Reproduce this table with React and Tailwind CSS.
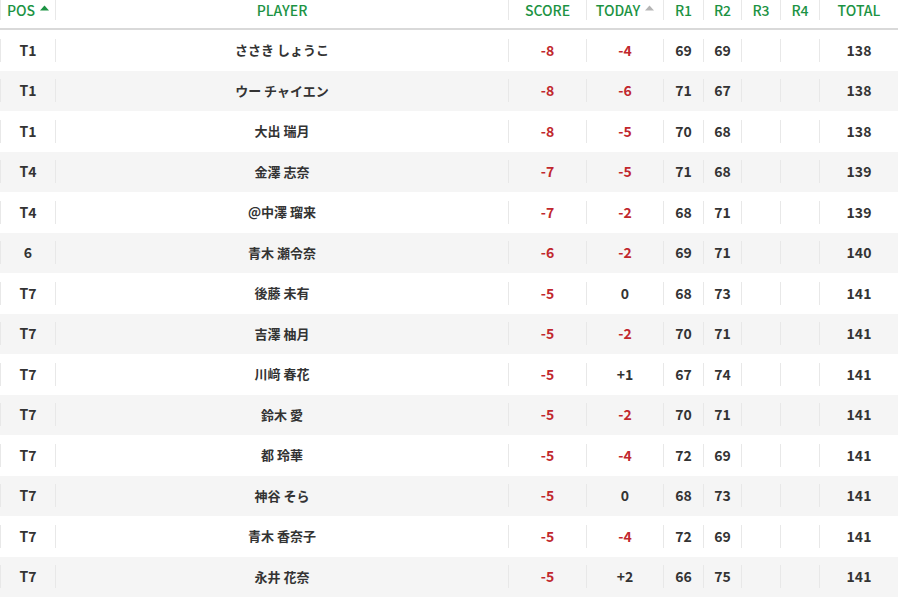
import React from 'react';

const rows = [
  ['T1', 'ささき しょうこ', '-8', '-4', '69', '69', '138'],
  ['T1', 'ウー チャイエン', '-8', '-6', '71', '67', '138'],
  ['T1', '大出 瑞月', '-8', '-5', '70', '68', '138'],
  ['T4', '金澤 志奈', '-7', '-5', '71', '68', '139'],
  ['T4', '@中澤 瑠来', '-7', '-2', '68', '71', '139'],
  ['6', '青木 瀬令奈', '-6', '-2', '69', '71', '140'],
  ['T7', '後藤 未有', '-5', '0', '68', '73', '141'],
  ['T7', '吉澤 柚月', '-5', '-2', '70', '71', '141'],
  ['T7', '川﨑 春花', '-5', '+1', '67', '74', '141'],
  ['T7', '鈴木 愛', '-5', '-2', '70', '71', '141'],
  ['T7', '都 玲華', '-5', '-4', '72', '69', '141'],
  ['T7', '神谷 そら', '-5', '0', '68', '73', '141'],
  ['T7', '青木 香奈子', '-5', '-4', '72', '69', '141'],
  ['T7', '永井 花奈', '-5', '+2', '66', '75', '141'],
];

const grid = 'grid grid-cols-[55px_453px_78px_77px_40px_38px_39px_39px_79px]';

const Arrow = ({ color }) => (
  <svg width="9" height="6" viewBox="0 0 9 6" className="ml-[5px] -mt-[4px]">
    <path d="M0 5.5 L4.5 0.5 L9 5.5 Z" fill={color} />
  </svg>
);

const HeadCell = ({ children }) => (
  <div className="h-7">
    <div className="h-5 border-l border-[#e8e8e8] flex items-center justify-center pb-[1px]">{children}</div>
  </div>
);

const Cell = ({ children, className = '' }) => (
  <div className="h-full flex items-center">
    <div className={`h-[23px] w-full border-l border-[#e8e8e8] flex items-center justify-center pb-[1px] ${className}`}>
      {children}
    </div>
  </div>
);

const tone = (v) => (v.startsWith('-') ? 'text-[#c1272d]' : 'text-[#333333]');

export default function App() {
  return (
    <div
      className="w-[898px] bg-white text-[14px] leading-none"
      style={{ fontFamily: '"Noto Sans CJK JP", "Noto Sans", sans-serif' }}
    >
      <div className={`${grid} text-[#1c9343] font-medium border-b-2 border-[#d9d9d9]`}>
        <HeadCell>POS<Arrow color="#1c9343" /></HeadCell>
        <HeadCell>PLAYER</HeadCell>
        <HeadCell>SCORE</HeadCell>
        <HeadCell>TODAY<Arrow color="#b5b5b5" /></HeadCell>
        <HeadCell>R1</HeadCell>
        <HeadCell>R2</HeadCell>
        <HeadCell>R3</HeadCell>
        <HeadCell>R4</HeadCell>
        <HeadCell>TOTAL</HeadCell>
      </div>
      {rows.map((r, i) => (
        <div
          key={i}
          className={`${grid} h-[40.5px] font-bold text-[#333333] ${i % 2 ? 'bg-[#f5f5f5]' : 'bg-white'}`}
        >
          <Cell>{r[0]}</Cell>
          <Cell className="text-[13px]">{r[1]}</Cell>
          <Cell className={tone(r[2])}>{r[2]}</Cell>
          <Cell className={tone(r[3])}>{r[3]}</Cell>
          <Cell>{r[4]}</Cell>
          <Cell>{r[5]}</Cell>
          <Cell />
          <Cell />
          <Cell>{r[6]}</Cell>
        </div>
      ))}
    </div>
  );
}
